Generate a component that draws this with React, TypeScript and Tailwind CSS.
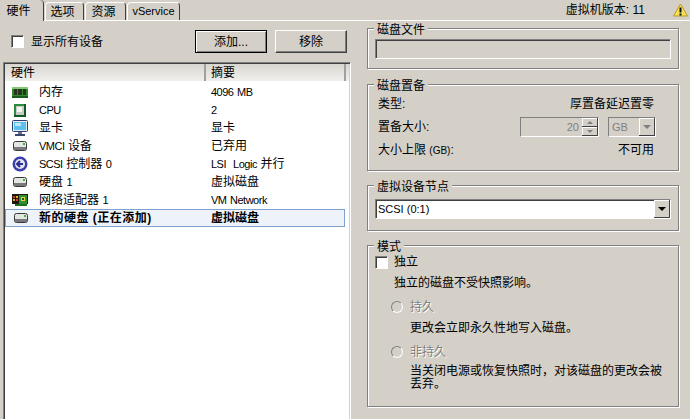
import type { ReactNode } from 'react';

const rows = [
  { icon: 'ram', name: '内存', summary: '4096 MB' },
  { icon: 'cpu', name: 'CPU', summary: '2' },
  { icon: 'monitor', name: '显卡', summary: '显卡' },
  { icon: 'disk', name: 'VMCI 设备', summary: '已弃用' },
  { icon: 'scsi', name: 'SCSI 控制器 0', summary: 'LSI  Logic 并行' },
  { icon: 'disk', name: '硬盘 1', summary: '虚拟磁盘' },
  { icon: 'nic', name: '网络适配器 1', summary: 'VM Network' },
];

// latin runs are smaller and tighter than the CJK around them
function Mixed({ text }: { text: string }) {
  const parts = text.split(/([\x00-\x7f]+)/);
  return (
    <>
      {parts.map((part, i) =>
        i % 2 === 1 ? (
          <span key={i} className="text-[11px] tracking-[-0.5px] [word-spacing:1px]">{part}</span>
        ) : (
          <span key={i}>{part}</span>
        ),
      )}
    </>
  );
}

function RowIcon({ type }: { type: string }) {
  if (type === 'ram') {
    return (
      <svg width="16" height="11" viewBox="0 0 16 11">
        <rect x="0" y="0" width="16" height="11" fill="#2f8a2f" />
        <rect x="0" y="0" width="16" height="2" fill="#86c77a" />
        <rect x="2" y="2" width="3" height="6" fill="#26331f" />
        <rect x="6" y="2" width="4" height="6" fill="#26331f" />
        <rect x="11" y="2" width="3" height="6" fill="#26331f" />
        <rect x="0" y="9" width="16" height="2" fill="#14601c" />
      </svg>
    );
  }
  if (type === 'cpu') {
    return (
      <svg width="12" height="13" viewBox="0 0 12 13">
        <rect x="0" y="0" width="12" height="13" fill="#2a8c3c" />
        <rect x="0" y="11" width="12" height="2" fill="#125a22" />
        <rect x="10" y="0" width="2" height="13" fill="#125a22" />
        <rect x="2" y="2" width="8" height="9" fill="#c8ccc4" />
        <rect x="3" y="3" width="5" height="5" fill="#f4f6f2" />
      </svg>
    );
  }
  if (type === 'monitor') {
    return (
      <svg width="16" height="16" viewBox="0 0 16 16">
        <rect x="0.5" y="0.5" width="15" height="11" rx="1" fill="#e8ecf4" stroke="#2c3b70" />
        <rect x="2" y="2" width="12" height="8" fill="#5cc0ee" />
        <rect x="3" y="3" width="6" height="3" fill="#b9e6fa" />
        <rect x="6" y="12" width="4" height="2" fill="#6a7290" />
        <rect x="3" y="14" width="10" height="2" fill="#3c4668" />
      </svg>
    );
  }
  if (type === 'disk') {
    return (
      <svg width="14" height="10" viewBox="0 0 14 10">
        <rect x="0.5" y="0.5" width="13" height="9" rx="2" fill="#e4e6e2" stroke="#3a3a3a" />
        <rect x="1" y="6" width="12" height="3" fill="#77797c" />
        <rect x="10" y="2" width="2" height="2" fill="#43b043" />
      </svg>
    );
  }
  if (type === 'scsi') {
    return (
      <svg width="16" height="16" viewBox="0 0 16 16">
        <circle cx="8" cy="8" r="7.5" fill="#3b3fa8" />
        <circle cx="8" cy="8" r="5" fill="#e4e6f4" />
        <path d="M11 8H6M8 5L5 8l3 3" fill="none" stroke="#2a2e90" strokeWidth="2" />
      </svg>
    );
  }
  return (
    <svg width="16" height="12" viewBox="0 0 16 12">
      <rect x="0" y="0" width="16" height="10" fill="#1a1a10" />
      <rect x="1" y="2" width="2" height="2" fill="#d83a2c" />
      <rect x="4" y="2" width="2" height="2" fill="#e6b020" />
      <rect x="1" y="5" width="2" height="2" fill="#e6b020" />
      <rect x="4" y="5" width="2" height="2" fill="#d83a2c" />
      <rect x="7" y="1" width="8" height="9" fill="#2f8f2f" />
      <rect x="9" y="3" width="4" height="4" fill="#e6d23c" />
      <rect x="10" y="4" width="2" height="2" fill="#1b4f1b" />
      <rect x="3" y="10" width="12" height="2" fill="#1f6f1f" />
    </svg>
  );
}

function GroupBox({ title, className, children }: { title: string; className: string; children?: ReactNode }) {
  return (
    <div className={`relative border border-[#808080] shadow-[1px_1px_0_#fff,inset_1px_1px_0_#fff] ${className}`}>
      <span className="absolute left-[6px] top-[-7px] bg-[#d4d0c8] px-[3px] text-[12px] leading-[16px]">{title}</span>
      {children}
    </div>
  );
}

function Checkbox() {
  return (
    <div className="h-[13px] w-[13px] shrink-0 border border-[#808080] border-b-white border-r-white bg-white shadow-[inset_1px_1px_0_#404040]" />
  );
}

function Radio() {
  return (
    <div className="h-[12px] w-[12px] shrink-0 rounded-full border border-[#808080] border-b-white border-r-white bg-[#d4d0c8]" />
  );
}

function DownArrow({ color = '#000000' }: { color?: string }) {
  return <div className="h-0 w-0 border-x-[4px] border-t-[4px] border-x-transparent" style={{ borderTopColor: color }} />;
}

export default function App() {
  return (
    <div
      className="flex h-[419px] w-[690px] flex-col overflow-hidden bg-[#d4d0c8] text-[12px] text-black"
      style={{ fontFamily: '"Liberation Sans", "Noto Sans CJK SC", sans-serif' }}
    >
      {/* Tabs */}
      <div className="flex h-[21px] shrink-0 items-end border-b border-white">
        <div className="relative z-10 mb-[-1px] flex h-[21px] w-[44px] items-center justify-center rounded-t-sm border-r border-r-[#404040] bg-[#d4d0c8] pr-[6px] text-[12px]">硬件</div>
        <div className="ml-[1px] flex h-[18px] w-[39px] items-center justify-center rounded-t-sm border-x border-t border-white border-r-[#404040] pr-[4px] pt-[1px] text-[12px]">选项</div>
        <div className="ml-[1px] flex h-[18px] w-[41px] items-center justify-center rounded-t-sm border-x border-t border-white border-r-[#404040] pr-[4px] pt-[1px] text-[12px]">资源</div>
        <div className="ml-[1px] flex h-[18px] w-[53px] items-center justify-center rounded-t-sm border-x border-t border-white border-r-[#404040] text-[11px]">vService</div>
        <div className="ml-auto flex h-[20px] items-center">
          <span className="text-[12px]">虚拟机版本: 11</span>
          <svg className="ml-[28px] mr-[2px]" width="15" height="14" viewBox="0 0 15 14">
            <path d="M7.5 1L14.5 13H.5z" fill="#f6e05a" stroke="#b89a20" />
            <rect x="6.5" y="4.5" width="2" height="5" fill="#111111" />
            <rect x="6.5" y="10.5" width="2" height="2" fill="#111111" />
          </svg>
        </div>
      </div>

      <div className="flex min-h-0 flex-1">
        {/* Left panel */}
        <div className="flex w-[351px] shrink-0 flex-col">
          <div className="flex h-[41px] shrink-0 items-center pl-[11px]">
            <Checkbox />
            <span className="ml-[7px] w-[72px] text-[12px]">显示所有设备</span>
            <button className="ml-[92px] h-[23px] w-[72px] border border-black bg-[#d4d0c8] text-[12px] shadow-[inset_1px_1px_0_#fff,inset_-1px_-1px_0_#808080]">添加...</button>
            <button className="ml-[8px] h-[23px] w-[72px] border border-b-[#404040] border-r-[#404040] border-l-white border-t-white bg-[#d4d0c8] text-[12px] shadow-[inset_-1px_-1px_0_#808080]">移除</button>
          </div>
          <div className="ml-[3px] w-[348px] flex-1 border-l border-r border-t border-l-[#808080] border-r-white border-t-[#808080] bg-white pl-px pr-px pt-px shadow-[inset_1px_1px_0_#404040,inset_-1px_0_0_#d4d0c8]">
            <div className="flex h-[17px] bg-gradient-to-b from-[#d8d6d0] to-[#f0efec]">
              <div className="w-[201px] border-r-2 border-r-[#a0a0a0] pl-[6px] leading-[18px]">硬件</div>
              <div className="w-[140px] border-r-2 border-r-[#a0a0a0] pl-[5px] leading-[18px]">摘要</div>
            </div>
            <div className="pt-[2px]">
              {rows.map((row, i) => (
                <div key={i} className="flex h-[18px] items-center">
                  <div className="flex w-[30px] shrink-0 justify-center">
                    <RowIcon type={row.icon} />
                  </div>
                  <div className="ml-[4px] w-[172px] shrink-0 whitespace-pre text-[12px]">
                    <Mixed text={row.name} />
                  </div>
                  <div className="whitespace-pre text-[12px]">
                    <Mixed text={row.summary} />
                  </div>
                </div>
              ))}
              <div className="flex h-[18px] w-[340px] items-center border border-[#7da2ce] bg-[#eef2f9] font-bold">
                <div className="flex w-[29px] shrink-0 justify-center">
                  <RowIcon type="disk" />
                </div>
                <div className="ml-[4px] w-[172px] shrink-0 text-[12px] tracking-[0.5px]">新的硬盘 (正在添加)</div>
                <div className="text-[12px]">虚拟磁盘</div>
              </div>
            </div>
          </div>
        </div>

        {/* Right panel */}
        <div className="flex-1 pl-[16px] pr-[11px] pt-[7px]">
          <GroupBox title="磁盘文件" className="h-[41px] pl-[7px] pr-[7px] pt-[10px]">
            <div className="h-[20px] border border-[#808080] border-b-white border-r-white shadow-[inset_1px_1px_0_#404040]" />
          </GroupBox>

          <GroupBox title="磁盘置备" className="mt-[15px] h-[87px] px-[10px] pt-[9px]">
            <div className="flex h-[20px] items-center justify-between pr-[14px]">
              <span>类型:</span>
              <span>厚置备延迟置零</span>
            </div>
            <div className="mt-[2px] flex h-[22px] items-center">
              <span>置备大小:</span>
              <div className="ml-auto flex h-[20px] w-[79px] items-center border border-[#808080] border-b-white border-r-white pl-[2px]">
                <span className="flex-1 pr-[3px] text-right text-[11px] text-[#808080]">20</span>
                <div className="flex h-[18px] w-[16px] flex-col">
                  <div className="flex flex-1 items-center justify-center border-b border-r border-b-[#404040] border-r-[#404040] shadow-[inset_1px_1px_0_#fff]">
                    <div className="h-0 w-0 border-x-[3px] border-b-[3px] border-x-transparent border-b-[#808080]" />
                  </div>
                  <div className="flex flex-1 items-center justify-center border-b border-r border-b-[#404040] border-r-[#404040] shadow-[inset_1px_1px_0_#fff]">
                    <div className="h-0 w-0 border-x-[3px] border-t-[3px] border-x-transparent border-t-[#808080]" />
                  </div>
                </div>
              </div>
              <div className="ml-[9px] mr-[12px] flex h-[20px] w-[48px] items-center justify-between border border-[#808080] border-b-white border-r-white pl-[3px] text-[11px] text-[#808080]">
                GB
                <div className="flex h-[18px] w-[16px] items-center justify-center border-b border-r border-b-[#404040] border-r-[#404040] shadow-[inset_1px_1px_0_#fff]">
                  <DownArrow color="#808080" />
                </div>
              </div>
            </div>
            <div className="mt-[2px] flex h-[20px] items-center justify-between pr-[14px]">
              <span>大小上限 <span className="text-[10px]">(GB)</span>:</span>
              <span>不可用</span>
            </div>
          </GroupBox>

          <GroupBox title="虚拟设备节点" className="mt-[14px] h-[46px] pl-[7px] pr-[7px] pt-[13px]">
            <div className="flex h-[20px] items-center border border-[#808080] border-b-white border-r-white bg-white pl-[2px] text-[11px] shadow-[inset_1px_1px_0_#404040]">
              <span className="flex-1">SCSI (0:1)</span>
              <div className="flex h-[18px] w-[16px] items-center justify-center border-b border-r border-b-[#404040] border-r-[#404040] bg-[#d4d0c8] shadow-[inset_1px_1px_0_#fff]">
                <DownArrow />
              </div>
            </div>
          </GroupBox>

          <GroupBox title="模式" className="mt-[14px] h-[162px] pl-[8px] pt-[9px]">
            <div className="-ml-px flex h-[14px] items-center">
              <Checkbox />
              <span className="ml-[6px]">独立</span>
            </div>
            <div className="mt-[6px] pl-[18px] leading-[16px]">独立的磁盘不受快照影响。</div>
            <div className="mt-[8px] flex h-[16px] items-center pl-[15px] text-[#808080] [text-shadow:1px_1px_0_#fff]">
              <Radio />
              <span className="ml-[7px]">持久</span>
            </div>
            <div className="mt-[5px] pl-[34px] leading-[16px]">更改会立即永久性地写入磁盘。</div>
            <div className="mt-[8px] flex h-[16px] items-center pl-[15px] text-[#808080] [text-shadow:1px_1px_0_#fff]">
              <Radio />
              <span className="ml-[7px]">非持久</span>
            </div>
            <div className="mt-[5px] w-[289px] pl-[34px] leading-[13px]">当关闭电源或恢复快照时，对该磁盘的更改会被丢弃。</div>
          </GroupBox>
        </div>
      </div>
    </div>
  );
}
